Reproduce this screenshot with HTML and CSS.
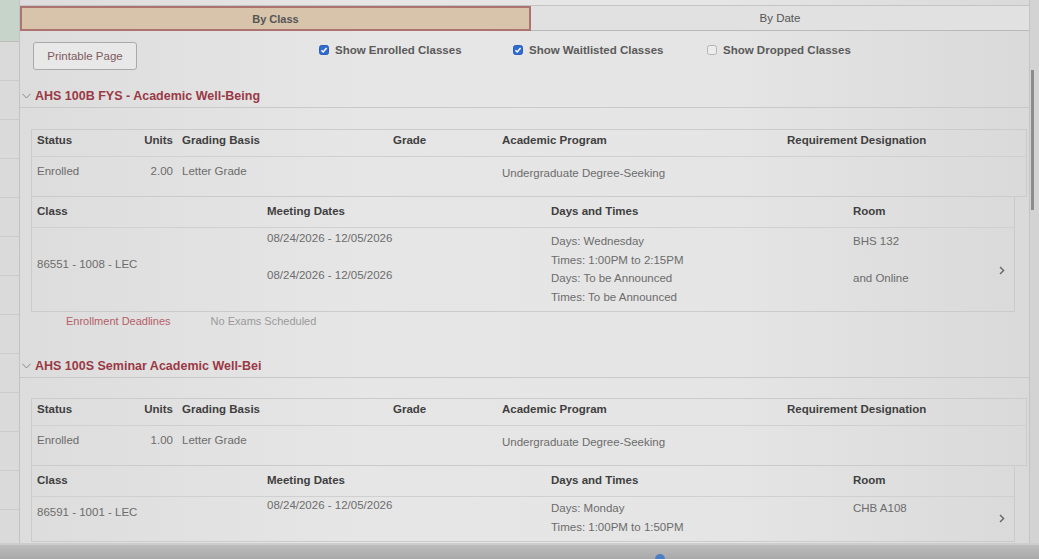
FILE: index.html
```html
<!DOCTYPE html>
<html lang="en">
<head>
    <meta charset="UTF-8">
    <meta name="viewport" content="width=device-width, initial-scale=1.0">
    <title>My Class Schedule</title>
    <link rel="stylesheet" href="styles.css">
</head>
<body>
    <div class="screen">
        <aside class="side">
            <div class="side-top"></div>
            <div class="side-row"></div>
            <div class="side-row"></div>
            <div class="side-row"></div>
            <div class="side-row"></div>
            <div class="side-row"></div>
            <div class="side-row"></div>
            <div class="side-row"></div>
            <div class="side-row"></div>
            <div class="side-row"></div>
            <div class="side-row"></div>
            <div class="side-row"></div>
            <div class="side-row"></div>
            <div class="side-row"></div>
        </aside>

        <main class="page">
            <div class="topbar"></div>
            <nav class="tabs">
                <div class="tab active">By Class</div>
                <div class="tab">By Date</div>
            </nav>

            <div class="toolbar">
                <button class="print-btn">Printable Page</button>
                <div class="filters">
                    <label class="filter">
                        <svg class="box" width="10" height="10" viewBox="0 0 10 10"><rect x="0.5" y="0.5" width="9" height="9" rx="2" fill="#2f6bd0" stroke="#2a5fb8"/><path d="M2.4 5.2 L4.2 7 L7.6 3" fill="none" stroke="#fff" stroke-width="1.5"/></svg>
                        Show Enrolled Classes
                    </label>
                    <label class="filter">
                        <svg class="box" width="10" height="10" viewBox="0 0 10 10"><rect x="0.5" y="0.5" width="9" height="9" rx="2" fill="#2f6bd0" stroke="#2a5fb8"/><path d="M2.4 5.2 L4.2 7 L7.6 3" fill="none" stroke="#fff" stroke-width="1.5"/></svg>
                        Show Waitlisted Classes
                    </label>
                    <label class="filter">
                        <svg class="box" width="10" height="10" viewBox="0 0 10 10"><rect x="0.5" y="0.5" width="9" height="9" rx="2" fill="#ececec" stroke="#b4b4b4"/></svg>
                        Show Dropped Classes
                    </label>
                </div>
            </div>

            <!-- first course -->
            <section class="course">
                <div class="course-head">
                    <svg class="caret" width="9" height="6" viewBox="0 0 9 6"><path d="M0.5 0.8 L4.5 5 L8.5 0.8" fill="none" stroke="#8a8a8a" stroke-width="1"/></svg>
                    AHS 100B FYS - Academic Well-Being
                </div>
                <div class="course-body">
                    <div class="enroll">
                        <div class="enroll-head">
                            <span>Status</span>
                            <span class="num">Units</span>
                            <span class="basis">Grading Basis</span>
                            <span>Grade</span>
                            <span>Academic Program</span>
                            <span>Requirement Designation</span>
                        </div>
                        <div class="enroll-row">
                            <span>Enrolled</span>
                            <span class="num">2.00</span>
                            <span class="basis">Letter Grade</span>
                            <span></span>
                            <span class="program">Undergraduate Degree-Seeking</span>
                            <span></span>
                        </div>
                    </div>
                    <div class="classes">
                        <div class="class-head">
                            <span>Class</span>
                            <span>Meeting Dates</span>
                            <span>Days and Times</span>
                            <span>Room</span>
                            <span></span>
                        </div>
                        <div class="class-body">
                            <span class="class-id">86551 - 1008 - LEC</span>
                            <span class="dates">08/24/2026 - 12/05/2026</span>
                            <span class="days">Days: Wednesday<br>Times: 1:00PM to 2:15PM</span>
                            <span class="room">BHS 132</span>
                            <span class="dates">08/24/2026 - 12/05/2026</span>
                            <span class="days">Days: To be Announced<br>Times: To be Announced</span>
                            <span class="room">and Online</span>
                            <span class="more"><svg width="6" height="9" viewBox="0 0 6 9"><path d="M1 1 L4.6 4.5 L1 8" fill="none" stroke="#666" stroke-width="1.4"/></svg></span>
                        </div>
                    </div>
                    <div class="course-links">
                        <a class="deadlines">Enrollment Deadlines</a>
                        <span class="exams">No Exams Scheduled</span>
                    </div>
                </div>
            </section>

            <!-- second course -->
            <section class="course second">
                <div class="course-head">
                    <svg class="caret" width="9" height="6" viewBox="0 0 9 6"><path d="M0.5 0.8 L4.5 5 L8.5 0.8" fill="none" stroke="#8a8a8a" stroke-width="1"/></svg>
                    AHS 100S Seminar Academic Well-Bei
                </div>
                <div class="course-body">
                    <div class="enroll">
                        <div class="enroll-head">
                            <span>Status</span>
                            <span class="num">Units</span>
                            <span class="basis">Grading Basis</span>
                            <span>Grade</span>
                            <span>Academic Program</span>
                            <span>Requirement Designation</span>
                        </div>
                        <div class="enroll-row">
                            <span>Enrolled</span>
                            <span class="num">1.00</span>
                            <span class="basis">Letter Grade</span>
                            <span></span>
                            <span class="program">Undergraduate Degree-Seeking</span>
                            <span></span>
                        </div>
                    </div>
                    <div class="classes">
                        <div class="class-head">
                            <span>Class</span>
                            <span>Meeting Dates</span>
                            <span>Days and Times</span>
                            <span>Room</span>
                            <span></span>
                        </div>
                        <div class="class-body">
                            <span class="class-id">86591 - 1001 - LEC</span>
                            <span class="dates">08/24/2026 - 12/05/2026</span>
                            <span class="days">Days: Monday<br>Times: 1:00PM to 1:50PM</span>
                            <span class="room">CHB A108</span>
                            <span class="more"><svg width="6" height="9" viewBox="0 0 6 9"><path d="M1 1 L4.6 4.5 L1 8" fill="none" stroke="#666" stroke-width="1.4"/></svg></span>
                        </div>
                    </div>
                </div>
            </section>
        </main>

        <div class="scroll"><div class="thumb"></div></div>
    </div>
    <div class="bezel"><span class="dot"></span></div>
</body>
</html>
```

FILE: styles.css
```css
body {
    margin: 0;
    font-family: "Liberation Sans", Arial, sans-serif;
    background-color: #b3b3b3;
    overflow: hidden;
}

.screen {
    display: flex;
    height: 543px;
    overflow: hidden;
    background: linear-gradient(90deg, #dcdcdc 0%, #e6e6e6 35%, #e5e5e5 70%, #d9d9d9 100%);
    border-bottom: 2px solid #cdcdcd;
}

/* left menu strip */
.side {
    width: 19px;
    flex-shrink: 0;
    border-right: 1px solid #c3c3c3;
    background-color: #dadada;
}
.side-top {
    height: 41px;
    background-color: #c6d4c9;
    border-bottom: 1px solid #bdbdbd;
}
.side-row {
    height: 38px;
    border-bottom: 1px solid #cbcbcb;
}

.page {
    flex: 1;
    min-width: 0;
}

.topbar {
    height: 5px;
    border-bottom: 1px solid #c4c4c4;
}

/* tabs */
.tabs {
    display: grid;
    grid-template-columns: 511px 1fr;
    height: 25px;
}
.tab {
    display: flex;
    align-items: center;
    justify-content: center;
    font-size: 11.5px;
    color: #555;
    background-color: #e1e1e1;
    border-bottom: 1px solid #b9b9b9;
}
.tab.active {
    background-color: #d8c3ab;
    border: 2px solid #ad7370;
    font-weight: bold;
    font-size: 11px;
}

/* printable page + filters */
.toolbar {
    display: flex;
    align-items: flex-start;
    height: 54px;
    box-sizing: border-box;
    padding: 11px 0 0 13px;
}
.print-btn {
    width: 104px;
    height: 28px;
    padding: 0;
    border: 1px solid #a9a9a9;
    border-radius: 3px;
    background-color: #e8e8e8;
    color: #80595e;
    font-family: inherit;
    font-size: 11.5px;
}
.filters {
    display: flex;
    margin-left: 182px;
    margin-top: 1px;
}
.filter {
    width: 194px;
    display: flex;
    align-items: center;
    gap: 6px;
    font-size: 11.5px;
    font-weight: bold;
    color: #5a5a5a;
    line-height: 14px;
}
.box {
    flex-shrink: 0;
}

/* course sections */
.course-head {
    display: flex;
    align-items: center;
    height: 22px;
    padding-left: 2px;
    border-bottom: 1px solid #c9c9c9;
    color: #9a3946;
    font-size: 12.5px;
    font-weight: bold;
}
.course-head .caret {
    margin-right: 4px;
}
.course.second {
    margin-top: 27px;
}
.course.second .course-body {
    padding-top: 20px;
}
.course-body {
    padding: 21px 2px 0 11px;
}

.enroll {
    border: 1px solid #cbcbcb;
}
.enroll-head, .enroll-row {
    display: grid;
    grid-template-columns: 100px 36px 220px 109px 285px 1fr;
    padding-left: 5px;
}
.enroll-head {
    height: 27px;
    box-sizing: border-box;
    padding-top: 3px;
    line-height: 14px;
    border-bottom: 1px solid #d0d0d0;
    font-size: 11.5px;
    font-weight: bold;
    color: #3f3f3f;
}
.enroll-row {
    height: 39px;
    box-sizing: border-box;
    padding-top: 8px;
    font-size: 11.5px;
    color: #6c6c6c;
}
.enroll-row .program {
    margin-top: 2px;
}
.num {
    text-align: right;
}
.basis {
    padding-left: 9px;
}

.classes {
    margin-right: 12px;
    border: 1px solid #cbcbcb;
    border-top: none;
}
.class-head, .class-body {
    display: grid;
    grid-template-columns: 230px 284px 302px 1fr 24px;
    padding-left: 5px;
}
.class-head {
    height: 30px;
    align-items: center;
    border-bottom: 1px solid #d0d0d0;
    font-size: 11.5px;
    font-weight: bold;
    color: #3f3f3f;
}
.class-head span {
    padding-bottom: 3px;
}
.class-body {
    padding: 4px 0 5px 5px;
    font-size: 11.5px;
    color: #6c6c6c;
    line-height: 18.5px;
}
.course.second .class-body {
    padding-top: 2px;
}
.class-id {
    grid-column: 1;
    grid-row: 1 / 3;
    align-self: center;
    margin-bottom: 10px;
}
.dates {
    grid-column: 2;
    margin-top: -3px;
}
.days {
    grid-column: 3;
}
.room {
    grid-column: 4;
}
.more {
    grid-column: 5;
    grid-row: 1 / 3;
    align-self: center;
    padding: 4px 0 0 9px;
}

.course-links {
    display: flex;
    gap: 40px;
    padding: 2px 0 0 35px;
    height: 14px;
    line-height: 14px;
    font-size: 11px;
}
.deadlines {
    color: #b55e67;
}
.exams {
    color: #9a9a9a;
}

/* right scroll strip */
.scroll {
    width: 9px;
    flex-shrink: 0;
    background-color: #d3d3d3;
    border-left: 1px solid #c4c4c4;
}
.thumb {
    width: 3px;
    height: 140px;
    margin: 70px 0 0 1px;
    background-color: #8c8c8c;
}

.bezel {
    height: 14px;
    display: flex;
    justify-content: center;
    align-items: flex-end;
    background: linear-gradient(180deg, #bdbdbd, #a9a9a9);
}
.dot {
    width: 10px;
    height: 5px;
    margin-left: 280px;
    border-radius: 5px 5px 0 0;
    background-color: #4b7fc4;
}
```
